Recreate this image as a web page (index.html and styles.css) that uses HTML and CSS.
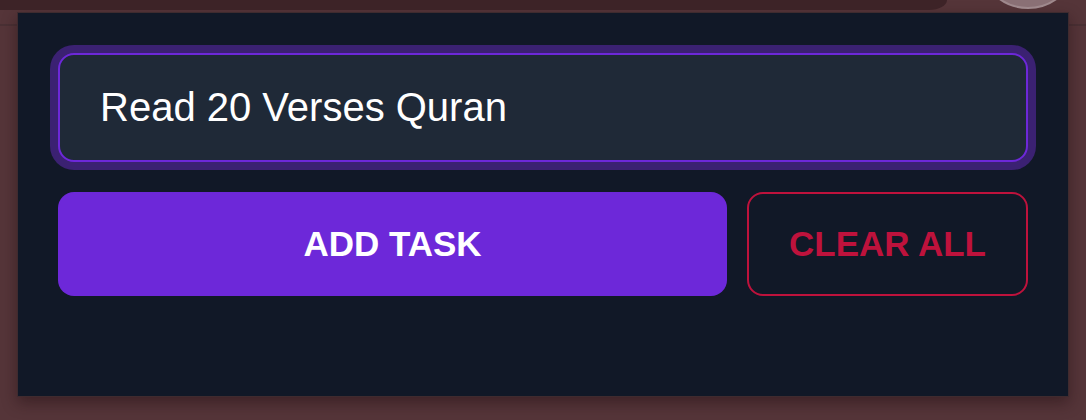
FILE: index.html
```html
<!DOCTYPE html>
<html lang="en">
<head>
<meta charset="utf-8">
<title>Tasks</title>
<link rel="stylesheet" href="styles.css">
</head>
<body>
<div class="topbar">
  <div class="topbar-pill"></div>
  <div class="topbar-avatar"></div>
</div>
<main class="panel">
  <input class="task-input" type="text" value="Read 20 Verses Quran">
  <div class="actions">
    <button class="btn btn-add" type="button">ADD TASK</button>
    <button class="btn btn-clear" type="button">CLEAR ALL</button>
  </div>
</main>
</body>
</html>
```
FILE: styles.css
```css
html, body {
  margin: 0;
  padding: 0;
}
body {
  width: 1086px;
  height: 420px;
  overflow: hidden;
  background-color: #553539;
  background-image: linear-gradient(to bottom, transparent 24px, #4a3034 24px, #4a3034 26px, transparent 26px);
  font-family: "Liberation Sans", Arial, sans-serif;
}
.topbar {
  display: flex;
  height: 10px;
  overflow: hidden;
}
.topbar-pill {
  width: 947px;
  height: 10px;
  background: #3d2327;
  border-bottom-right-radius: 18px 10px;
}
.topbar-avatar {
  flex: none;
  width: 100px;
  height: 100px;
  margin-top: -91px;
  margin-left: 31px;
  border-radius: 50%;
  background: #8a7075;
  box-sizing: border-box;
  border: 2px solid #9f898d;
}
.panel {
  display: block;
  box-sizing: border-box;
  width: 1052px;
  margin: 2px 0 0 17px;
  padding: 40px 40px 100px;
  background: #111827;
  border: 1px solid #3f2b2f;
  box-shadow: 0 6px 14px rgba(30, 12, 16, 0.45);
}
.task-input {
  display: block;
  box-sizing: border-box;
  width: 100%;
  height: 109px;
  margin: 0;
  padding: 0 40px;
  background: #1f2937;
  color: #ffffff;
  border: 2px solid #6d28d9;
  border-radius: 16px;
  box-shadow: 0 0 0 8px #3b2172;
  outline: none;
  font-family: "Liberation Sans", Arial, sans-serif;
  font-size: 40px;
}
.actions {
  display: flex;
  gap: 20px;
  margin-top: 30px;
}
.btn {
  box-sizing: border-box;
  height: 104px;
  margin: 0;
  border-radius: 16px;
  font-family: "Liberation Sans", Arial, sans-serif;
  font-weight: 700;
  font-size: 35px;
  cursor: pointer;
}
.btn-add {
  flex: 1;
  background: #6d28d9;
  color: #ffffff;
  border: none;
}
.btn-clear {
  flex: none;
  padding: 0 40px;
  background: transparent;
  color: #be123c;
  border: 2px solid #be123c;
}
```
